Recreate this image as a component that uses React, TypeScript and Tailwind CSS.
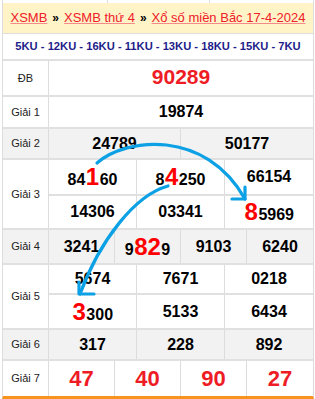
import React from "react";

const BR = "border-[#e0e0e0]";

function Label({ children }: { children: React.ReactNode }) {
  return (
    <div className="w-[46px] shrink-0 border-r border-[#dcdcdc] flex items-center justify-center text-[11px] text-[#222]">
      {children}
    </div>
  );
}

function Num({ children }: { children: React.ReactNode }) {
  return (
    <div className="flex items-center justify-center text-[16px] font-bold text-black leading-none">
      <span>{children}</span>
    </div>
  );
}

function Big({ children }: { children: React.ReactNode }) {
  return <span className="text-[#ff0000] text-[24px] mx-[0.5px]">{children}</span>;
}

function Red({ children }: { children: React.ReactNode }) {
  return (
    <div className="flex items-center justify-center text-[22px] font-bold text-[#ee1c25] leading-none">
      {children}
    </div>
  );
}

export default function App() {
  return (
    <div className="relative w-[315px] h-[399px] overflow-hidden bg-white font-['Liberation_Sans',Arial,sans-serif]">
      <div className="ml-[2px] w-[312px]">
        {/* top strip */}
        <div className="h-[3px] border-x border-[#dddddd] flex">
          <div className="w-[105px] border-r border-[#dddddd]" />
          <div className="w-[102px] border-r border-[#dddddd]" />
        </div>
        {/* header */}
        <div className="h-[30px] bg-[#fff3c8] border-x border-[#dddddd] flex items-center justify-center text-[13px] whitespace-nowrap">
          <span className="text-[#ee2028] underline decoration-[#f48a8a]">XSMB</span>
          <span className="text-black font-bold mx-[5px] text-[12px]">»</span>
          <span className="text-[#ee2028] underline decoration-[#f48a8a]">XSMB thứ 4</span>
          <span className="text-black font-bold mx-[5px] text-[12px]">»</span>
          <span className="text-[#ee2028] underline decoration-[#f48a8a]">Xổ số miền Bắc 17-4-2024</span>
        </div>
        {/* KU row */}
        <div className="h-[26px] border-x border-t border-[#dddddd] flex items-center justify-center text-[11.2px] font-bold text-[#1d1d8a] whitespace-nowrap">
          5KU - 12KU - 16KU - 11KU - 13KU - 18KU - 15KU - 7KU
        </div>
        {/* table */}
        <div className="border-x border-[#dddddd] border-b-[3px] border-b-[#f7941d]">
          {/* DB */}
          <div className={`h-[36px] flex border-t-2 ${BR} bg-white`}>
            <Label>ĐB</Label>
            <div className="flex-1 flex items-center justify-center text-[21px] font-bold text-[#ee1c25] leading-none pb-[4px]">
              90289
            </div>
          </div>
          {/* G1 */}
          <div className={`h-[32px] flex border-t-2 ${BR} bg-white`}>
            <Label>Giải 1</Label>
            <div className="flex-1 grid grid-cols-1">
              <Num>19874</Num>
            </div>
          </div>
          {/* G2 */}
          <div className={`h-[31px] flex border-t-2 ${BR} bg-[#f2f2f2]`}>
            <Label>Giải 2</Label>
            <div className="flex-1 grid grid-cols-2 divide-x divide-[#dcdcdc]">
              <Num>24789</Num>
              <Num>50177</Num>
            </div>
          </div>
          {/* G3 */}
          <div className={`h-[70px] flex border-t-2 ${BR} bg-white`}>
            <Label>Giải 3</Label>
            <div className="flex-1 flex flex-col">
              <div className="h-[34px] grid grid-cols-3 divide-x divide-[#dcdcdc]">
                <Num>
                  84<Big>1</Big>60
                </Num>
                <Num>
                  8<Big>4</Big>250
                </Num>
                <Num>66154</Num>
              </div>
              <div className={`flex-1 grid grid-cols-3 divide-x divide-[#dcdcdc] border-t-2 ${BR}`}>
                <Num>14306</Num>
                <Num>03341</Num>
                <Num>
                  <Big>8</Big>5969
                </Num>
              </div>
            </div>
          </div>
          {/* G4 */}
          <div className={`h-[35px] flex border-t-2 ${BR} bg-[#f2f2f2]`}>
            <Label>Giải 4</Label>
            <div className="flex-1 grid grid-cols-4 divide-x divide-[#dcdcdc]">
              <Num>3241</Num>
              <Num>
                9<Big>82</Big>9
              </Num>
              <Num>9103</Num>
              <Num>6240</Num>
            </div>
          </div>
          {/* G5 */}
          <div className={`h-[65px] flex border-t-2 ${BR} bg-white`}>
            <Label>Giải 5</Label>
            <div className="flex-1 flex flex-col">
              <div className="h-[28px] grid grid-cols-3 divide-x divide-[#dcdcdc]">
                <Num>5674</Num>
                <Num>7671</Num>
                <Num>0218</Num>
              </div>
              <div className={`flex-1 grid grid-cols-3 divide-x divide-[#dcdcdc] border-t-2 ${BR}`}>
                <Num>
                  <Big>3</Big>300
                </Num>
                <Num>5133</Num>
                <Num>6434</Num>
              </div>
            </div>
          </div>
          {/* G6 */}
          <div className={`h-[31px] flex border-t-2 ${BR} bg-[#f2f2f2]`}>
            <Label>Giải 6</Label>
            <div className="flex-1 grid grid-cols-3 divide-x divide-[#dcdcdc]">
              <Num>317</Num>
              <Num>228</Num>
              <Num>892</Num>
            </div>
          </div>
          {/* G7 */}
          <div className={`h-[37px] flex border-t-2 ${BR} bg-white`}>
            <Label>Giải 7</Label>
            <div className="flex-1 grid grid-cols-4 divide-x divide-[#dcdcdc]">
              <Red>47</Red>
              <Red>40</Red>
              <Red>90</Red>
              <Red>27</Red>
            </div>
          </div>
        </div>
      </div>
      {/* arrows overlay */}
      <svg
        className="absolute left-0 top-0 pointer-events-none"
        width="315"
        height="399"
        viewBox="0 0 315 399"
        fill="none"
        stroke="#0ca0e4"
        strokeWidth="3.2"
        strokeLinecap="round"
        strokeLinejoin="round"
      >
        <path d="M97,163 C125,138 205,128 245,199" />
        <polyline points="245,187 245,199 232,199" />
        <path d="M168,186 C135,195 100,240 80,294" />
        <polyline points="79,282 79,294 94,294" />
      </svg>
    </div>
  );
}
